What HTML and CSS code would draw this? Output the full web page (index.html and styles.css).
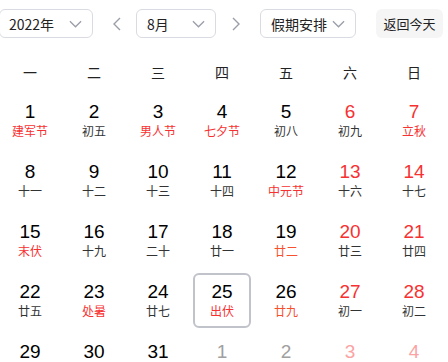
FILE: index.html
```html
<!DOCTYPE html>
<html lang="zh-CN">
<head>
<meta charset="utf-8">
<link rel="stylesheet" href="styles.css">
</head>
<body>
<div class="toolbar">
  <div class="select year"><span>2022年</span><svg class="chev" viewBox="0 0 14 8"><path d="M1 1l6 6 6-6"/></svg></div>
  <svg class="arrow prev" viewBox="0 0 8 14"><path d="M7 1L1 7l6 6"/></svg>
  <div class="select month"><span>8月</span><svg class="chev" viewBox="0 0 14 8"><path d="M1 1l6 6 6-6"/></svg></div>
  <svg class="arrow next" viewBox="0 0 8 14"><path d="M1 1l6 6-6 6"/></svg>
  <div class="select holiday"><span>假期安排</span><svg class="chev" viewBox="0 0 14 8"><path d="M1 1l6 6 6-6"/></svg></div>
  <button class="today-btn">返回今天</button>
</div>
<div class="weekdays">
  <div>一</div><div>二</div><div>三</div><div>四</div><div>五</div><div>六</div><div>日</div>
</div>
<div class="days">
  <div class="day"><div class="num">1</div><div class="lunar fest">建军节</div></div>
  <div class="day"><div class="num">2</div><div class="lunar">初五</div></div>
  <div class="day"><div class="num">3</div><div class="lunar fest">男人节</div></div>
  <div class="day"><div class="num">4</div><div class="lunar fest">七夕节</div></div>
  <div class="day"><div class="num">5</div><div class="lunar">初八</div></div>
  <div class="day weekend"><div class="num">6</div><div class="lunar">初九</div></div>
  <div class="day weekend"><div class="num">7</div><div class="lunar fest">立秋</div></div>

  <div class="day"><div class="num">8</div><div class="lunar">十一</div></div>
  <div class="day"><div class="num">9</div><div class="lunar">十二</div></div>
  <div class="day"><div class="num">10</div><div class="lunar">十三</div></div>
  <div class="day"><div class="num">11</div><div class="lunar">十四</div></div>
  <div class="day"><div class="num">12</div><div class="lunar fest">中元节</div></div>
  <div class="day weekend"><div class="num">13</div><div class="lunar">十六</div></div>
  <div class="day weekend"><div class="num">14</div><div class="lunar">十七</div></div>

  <div class="day"><div class="num">15</div><div class="lunar fest">末伏</div></div>
  <div class="day"><div class="num">16</div><div class="lunar">十九</div></div>
  <div class="day"><div class="num">17</div><div class="lunar">二十</div></div>
  <div class="day"><div class="num">18</div><div class="lunar">廿一</div></div>
  <div class="day"><div class="num">19</div><div class="lunar fest2">廿二</div></div>
  <div class="day weekend"><div class="num">20</div><div class="lunar">廿三</div></div>
  <div class="day weekend"><div class="num">21</div><div class="lunar">廿四</div></div>

  <div class="day"><div class="num">22</div><div class="lunar">廿五</div></div>
  <div class="day"><div class="num">23</div><div class="lunar fest">处暑</div></div>
  <div class="day"><div class="num">24</div><div class="lunar">廿七</div></div>
  <div class="day today"><div class="num">25</div><div class="lunar fest">出伏</div></div>
  <div class="day"><div class="num">26</div><div class="lunar fest2">廿九</div></div>
  <div class="day weekend"><div class="num">27</div><div class="lunar">初一</div></div>
  <div class="day weekend"><div class="num">28</div><div class="lunar">初二</div></div>

  <div class="day"><div class="num">29</div><div class="lunar">初三</div></div>
  <div class="day"><div class="num">30</div><div class="lunar">初四</div></div>
  <div class="day"><div class="num">31</div><div class="lunar">初五</div></div>
  <div class="day other"><div class="num">1</div><div class="lunar">初六</div></div>
  <div class="day other"><div class="num">2</div><div class="lunar">初七</div></div>
  <div class="day other weekend"><div class="num">3</div><div class="lunar">初八</div></div>
  <div class="day other weekend"><div class="num">4</div><div class="lunar">初九</div></div>
</div>
</body>
</html>
```
FILE: styles.css
```css
html, body {
  margin: 0;
  padding: 0;
  background: #fff;
  overflow: hidden;
}
body {
  width: 448px;
  height: 362px;
  font-family: "Liberation Sans", "Noto Sans CJK SC", sans-serif;
  color: #000;
}
.toolbar {
  display: flex;
  align-items: center;
  height: 29px;
  margin-top: 9px;
  font-family: "Noto Sans CJK SC", sans-serif;
}
.select {
  box-sizing: border-box;
  height: 29px;
  border: 1px solid #d9dbe2;
  border-radius: 6px;
  display: flex;
  align-items: center;
  justify-content: space-between;
  padding: 0 10px 0 9px;
  font-size: 14px;
  color: #222;
}
.select span { line-height: 20px; }
.year { width: 94px; margin-left: -1px; }
.month { width: 80px; padding-left: 10px; }
.holiday { width: 96px; padding-left: 10px; }
.chev {
  width: 13px;
  height: 8px;
  fill: none;
  stroke: #9a9ea8;
  stroke-width: 1.4;
}
.arrow {
  width: 8px;
  height: 14px;
  fill: none;
  stroke: #9a9ea8;
  stroke-width: 1.4;
}
.prev { margin: 0 15px 0 20px; }
.next { margin: 0 20px 0 16px; }
.today-btn {
  margin-left: 20px;
  width: 67px;
  height: 29px;
  border: none;
  border-radius: 6px;
  background: #f5f5f6;
  font-family: "Noto Sans CJK SC", sans-serif;
  font-size: 13px;
  color: #222;
  padding: 0;
}
.weekdays, .days {
  display: grid;
  grid-template-columns: repeat(7, 58px);
  column-gap: 6px;
  margin-left: 1px;
}
.weekdays {
  margin-top: 24px;
  font-family: "Noto Sans CJK SC", sans-serif;
  font-size: 14px;
  line-height: 20px;
  color: #222;
  text-align: center;
}
.days {
  margin-top: 11px;
  row-gap: 5px;
}
.day {
  box-sizing: border-box;
  height: 55px;
  padding-top: 8px;
  text-align: center;
  border: 2px solid transparent;
  border-radius: 6px;
}
.day .num {
  font-size: 19px;
  line-height: 22px;
  margin-top: -2px;
  color: #000;
}
.day .lunar {
  font-family: "Noto Sans CJK SC", sans-serif;
  font-size: 12px;
  line-height: 16px;
  color: #333;
}
.lunar.fest { color: #f73131; }
.lunar.fest2 { color: #f7502e; }
.weekend .num { color: #f73131; }
.today { border-color: #c1c3cb; }
.other .num { color: #a0a0a0; }
.other.weekend .num { color: #fba3a3; }
.other .lunar { color: #a0a0a0; }
```
